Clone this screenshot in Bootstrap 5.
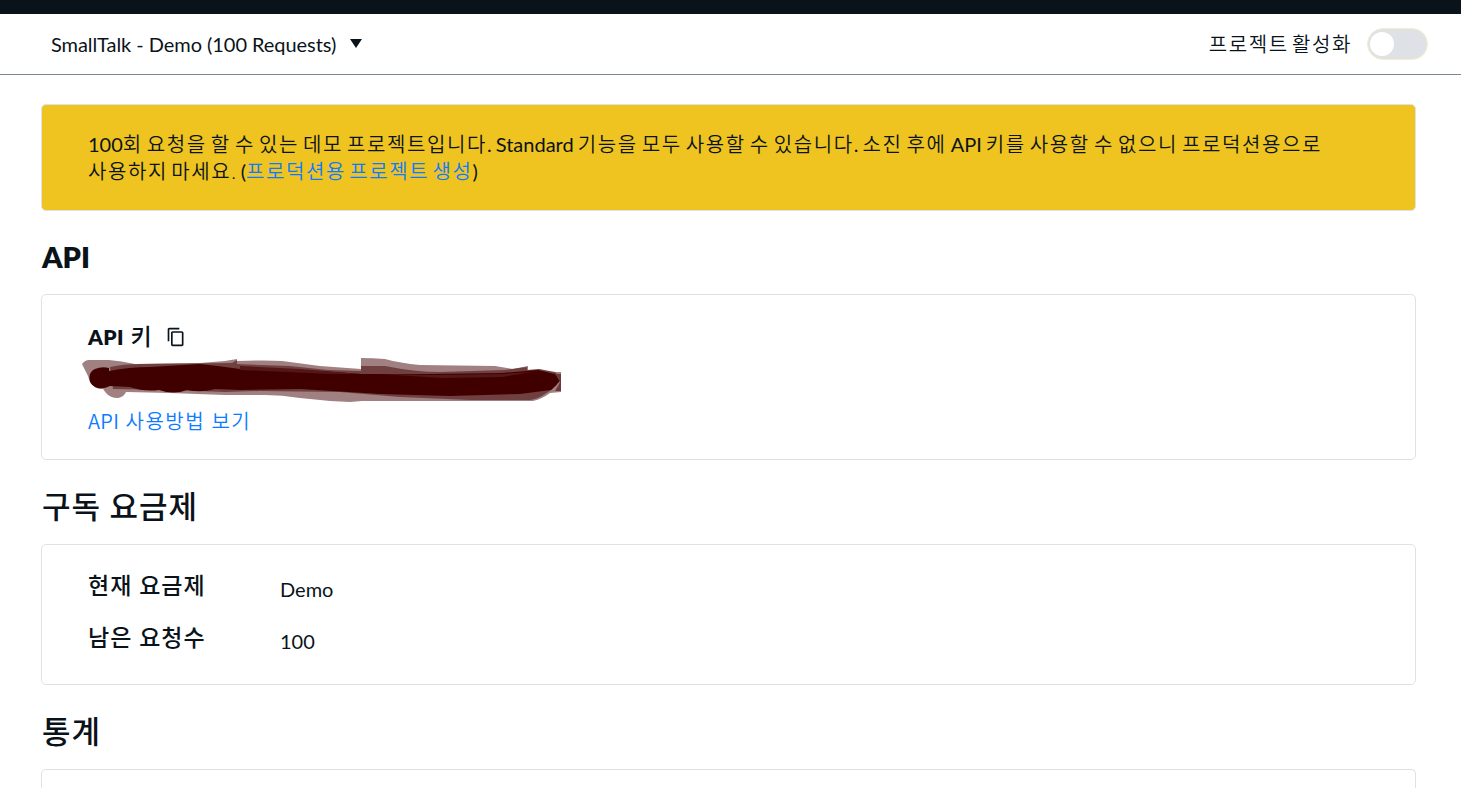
<!DOCTYPE html>
<html lang="ko">
<head>
  <meta charset="UTF-8">
  <meta name="viewport" content="width=device-width, initial-scale=1.0">
  <title>SmallTalk - Demo</title>
  <link href="https://cdn.jsdelivr.net/npm/bootstrap@5.3.0/dist/css/bootstrap.min.css" rel="stylesheet">
  <style>
    body {
      font-family: Lato, "Noto Sans CJK KR", sans-serif;
      font-size: 20px;
      line-height: 27px;
      color: #0a131a;
      background: #fff;
    }
    a {
      color: #0d7bff;
      text-decoration: none;
    }
    .top-strip {
      height: 14px;
      background: #0a131a;
    }
    .project-bar {
      height: 61px;
      border-bottom: 1px solid #7c8790;
      padding: 0 33px 0 51px;
    }
    .project-name {
      letter-spacing: -0.05px;
    }
    .project-caret {
      margin-left: 14px;
      margin-bottom: 2px;
    }
    .ko-text {
      font-weight: 350;
      letter-spacing: 1.6px;
      word-spacing: -3.8px;
    }
    .toggle-label {
      margin-right: 15px;
      padding-top: 1px;
    }
    .en-text {
      font-weight: 400;
      letter-spacing: 0;
    }
    .project-toggle {
      width: 61px;
      height: 32px;
      border-radius: 16px;
      border: 1px solid #f8edc8;
      background: #dee2e6;
      padding: 2px;
    }
    .project-toggle span {
      width: 24px;
      height: 24px;
      background: #fff;
    }
    .page-body {
      padding: 29px 45px 0 41px;
    }
    .panel {
      border: 1px solid #dee2e6;
      border-radius: 5px;
      padding: 0 46px;
    }
    .demo-notice {
      height: 107px;
      background: #efc320;
      padding-top: 26px;
    }
    .demo-notice::first-line {
      word-spacing: -3px;
    }
    .section-title {
      height: 84px;
      padding: 28px 0 0 1px;
      font-size: 31px;
      line-height: 36px;
      letter-spacing: 0.9px;
      font-weight: 500;
      margin: 0;
    }
    .api-heading {
      height: 83px;
      font-size: 29px;
      font-weight: 800;
      letter-spacing: 0;
    }
    .item-title {
      font-size: 23px;
      line-height: 28px;
      letter-spacing: 1px;
      font-weight: 500;
      margin: 0;
    }
    .item-title strong {
      font-size: 21px;
      font-weight: 800;
      letter-spacing: 0.3px;
    }
    .api-panel {
      height: 166px;
      padding-top: 27px;
    }
    .copy-icon {
      margin-left: 13px;
    }
    .key-mask {
      margin: 5px 0 3px -8px;
    }
    .guide-link {
      font-family: "Noto Sans CJK KR", sans-serif;
      font-weight: 350;
      letter-spacing: 1.5px;
      word-spacing: -0.8px;
    }
    .guide-link span {
      letter-spacing: 0.3px;
    }
    .plan-panel {
      height: 141px;
      padding-top: 26px;
    }
    .plan-row {
      height: 52px;
    }
    .plan-row .item-title {
      width: 192px;
    }
    .plan-row p {
      padding-top: 5px;
    }
    .stats-panel {
      height: 19px;
      border-bottom: 0;
      border-radius: 5px 5px 0 0;
    }
  </style>
</head>
<body>
  <div class="top-strip"></div>

  <header class="project-bar d-flex justify-content-between align-items-center">
    <div class="d-flex align-items-center">
      <span class="project-name">SmallTalk - Demo (100 Requests)</span>
      <svg class="project-caret" width="12" height="9" viewBox="0 0 12 9"><path d="M0 0h12L6 9z" fill="#0a131a"/></svg>
    </div>
    <div class="d-flex align-items-center">
      <span class="ko-text toggle-label">프로젝트 활성화</span>
      <div class="project-toggle d-flex align-items-center" role="switch" aria-checked="false">
        <span class="rounded-circle"></span>
      </div>
    </div>
  </header>

  <main class="page-body">
    <div class="panel demo-notice ko-text">
      <span class="en-text">100</span>회 요청을 할 수 있는 데모 프로젝트입니다<span class="en-text">.</span> <span class="en-text">Standard</span> 기능을 모두 사용할 수 있습니다<span class="en-text">.</span> 소진 후에 <span class="en-text">API</span> 키를 사용할 수 없으니 프로덕션용으로<br>
      사용하지 마세요. <span class="en-text">(</span><a href="#">프로덕션용 프로젝트 생성</a><span class="en-text">)</span>
    </div>

    <h2 class="section-title api-heading">API</h2>
    <section class="panel api-panel">
      <div class="d-flex align-items-center">
        <h3 class="item-title"><strong>API</strong> 키</h3>
        <svg class="copy-icon" width="20" height="20" viewBox="0 0 24 24"><path d="M16 1H4c-1.100 0-2 .9-2 2v14h2V3h12V1zm3 4H8c-1.100 0-2 .9-2 2v14c0 1.100.9 2 2 2h11c1.100 0 2-.9 2-2V7c0-1.100-.9-2-2-2zm0 16H8V7h11v14z" fill="#0a131a"/></svg>
      </div>
      <!-- hidden API key, brushed over -->
      <svg class="key-mask d-block" width="486" height="48" viewBox="80 356 486 48">
        <path fill="#a08080" d="M82 364q3-4 7-4h20q12 1 26 4l65-1 25-2 12-2v2q30-1 45 0l38 5 41 3v-11q12 0 24 1 15 4 35 6l75 1 18 3 15-3v6h33v20l-11 1q-8 6-17 8H362l-12 1q-25-1-50-4-18-3-35-3h-40l-55-2-44-1q-2 5-8 6-8 0-12-5l-3-4q-6 0-8-2-6-6-7-11z"/>
        <path fill="#704040" d="M110 367q14-3 30-3l92-1 5-3v4l53 2 38 4 33 1v-5h24q30 6 55 6l65-2 22-3v3l12-1 16 3 3 3-1 10q-6 6-12 9-7 5-15 6h-60l-70-3-60-5-80-1-35 1-52-2-60-1-3-22z"/>
        <path fill="#400000" d="M109 371q20-4 41-4l50-3q20 2 40 5l80 2 41 3h70l70-1 37-3 17 4 5 7-9 9-31 4-70 2-70-2-80-5-60 1-25-1q-13 4-28 1-13 5-28 0-15 2-29-3l-20-1q-8 4-15 1a10 10 0 0 1 0-18q7-3 14-1z"/>
        <path fill="#541717" d="M240 366l60 3 61 5h-30l-91-4zM380 374l55 1 65-1 32-2-30 5-60 1z"/>
        <path fill="#6a3838" d="M556 374h5v17h-6l3-5 2-4z"/>
      </svg>
      <a class="guide-link d-block" href="#"><span>API</span> 사용방법 보기</a>
    </section>

    <h2 class="section-title">구독 요금제</h2>
    <section class="panel plan-panel">
      <div class="plan-row d-flex">
        <h3 class="item-title">현재 요금제</h3>
        <p class="mb-0">Demo</p>
      </div>
      <div class="plan-row d-flex">
        <h3 class="item-title">남은 요청수</h3>
        <p class="mb-0">100</p>
      </div>
    </section>

    <h2 class="section-title">통계</h2>
    <section class="panel stats-panel"></section>
  </main>
  <script src="https://cdn.jsdelivr.net/npm/bootstrap@5.3.0/dist/js/bootstrap.bundle.min.js"></script>
</body>
</html>
